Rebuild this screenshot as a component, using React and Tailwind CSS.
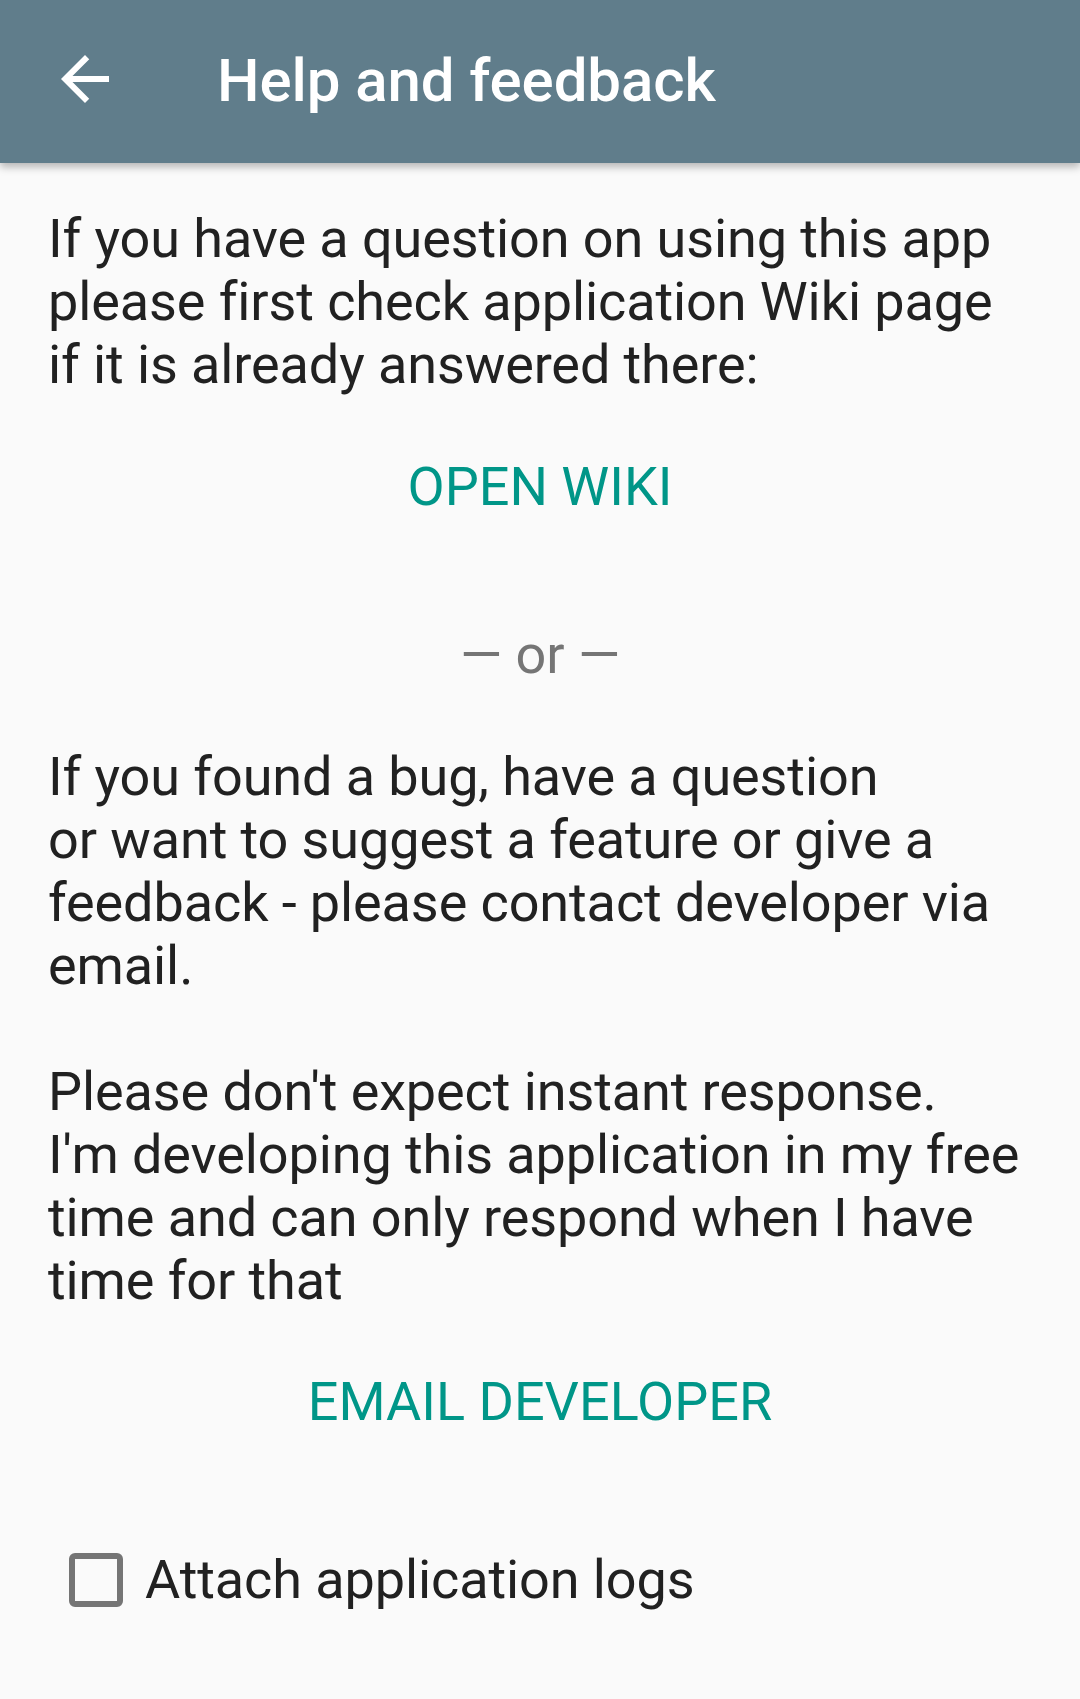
export default function App() {
    const lines1 = [
        'If you have a question on using this app',
        'please first check application Wiki page',
        'if it is already answered there:',
    ];
    const lines2 = [
        'If you found a bug, have a question',
        'or want to suggest a feature or give a',
        'feedback - please contact developer via',
        'email.',
        '\u00a0',
        "Please don't expect instant response.",
        "I'm developing this application in my free",
        'time and can only respond when I have',
        'time for that',
    ];

    return (
        <div className="min-h-[1699px] w-[1080px] bg-[#fafafa] font-['Roboto',sans-serif] text-[#212121]">
            {/* Toolbar */}
            <header className="relative h-[163px] bg-[#607d8b] flex items-start shadow-[0_4px_8px_rgba(0,0,0,0.28)]">
                <div className="ml-[49px] mt-[43px] w-[72px] h-[72px]">
                    <svg viewBox="0 0 24 24" className="w-[72px] h-[72px]" fill="#ffffff">
                        <path d="M20 11H7.83l5.59-5.59L12 4l-8 8 8 8 1.41-1.41L7.83 13H20v-2z" />
                    </svg>
                </div>
                <h1 className="ml-[96px] mt-[46px] text-[60px] leading-[70px] font-medium text-white tracking-[-0.1px]">
                    Help and feedback
                </h1>
            </header>

            <main className="px-[48px]">
                <div className="pt-[44px] text-[54px] leading-[63px] tracking-[-0.1px]">
                    {lines1.map((l, i) => (
                        <div key={i} className="whitespace-nowrap">{l}</div>
                    ))}
                </div>

                <div className="mt-[59px] text-center text-[54px] leading-[63px] text-[#009688] uppercase">
                    Open Wiki
                </div>

                <div className="mt-[105px] text-center text-[54px] leading-[63px] text-[#757575]">
                    — or —
                </div>

                <div className="mt-[59px] text-[54px] leading-[63px] tracking-[-0.1px]">
                    {lines2.map((l, i) => (
                        <div key={i} className="whitespace-nowrap">{l}</div>
                    ))}
                </div>

                <div className="mt-[58px] text-center text-[54px] leading-[63px] text-[#009688] uppercase">
                    Email Developer
                </div>

                <label className="mt-[115px] flex items-center">
                    <span className="ml-[21px] w-[54px] h-[54px] rounded-[6px] border-[6px] border-[#757575] shrink-0" />
                    <span className="ml-[22px] text-[54px] leading-[63px] tracking-[-0.1px]">Attach application logs</span>
                </label>
            </main>
        </div>
    );
}
